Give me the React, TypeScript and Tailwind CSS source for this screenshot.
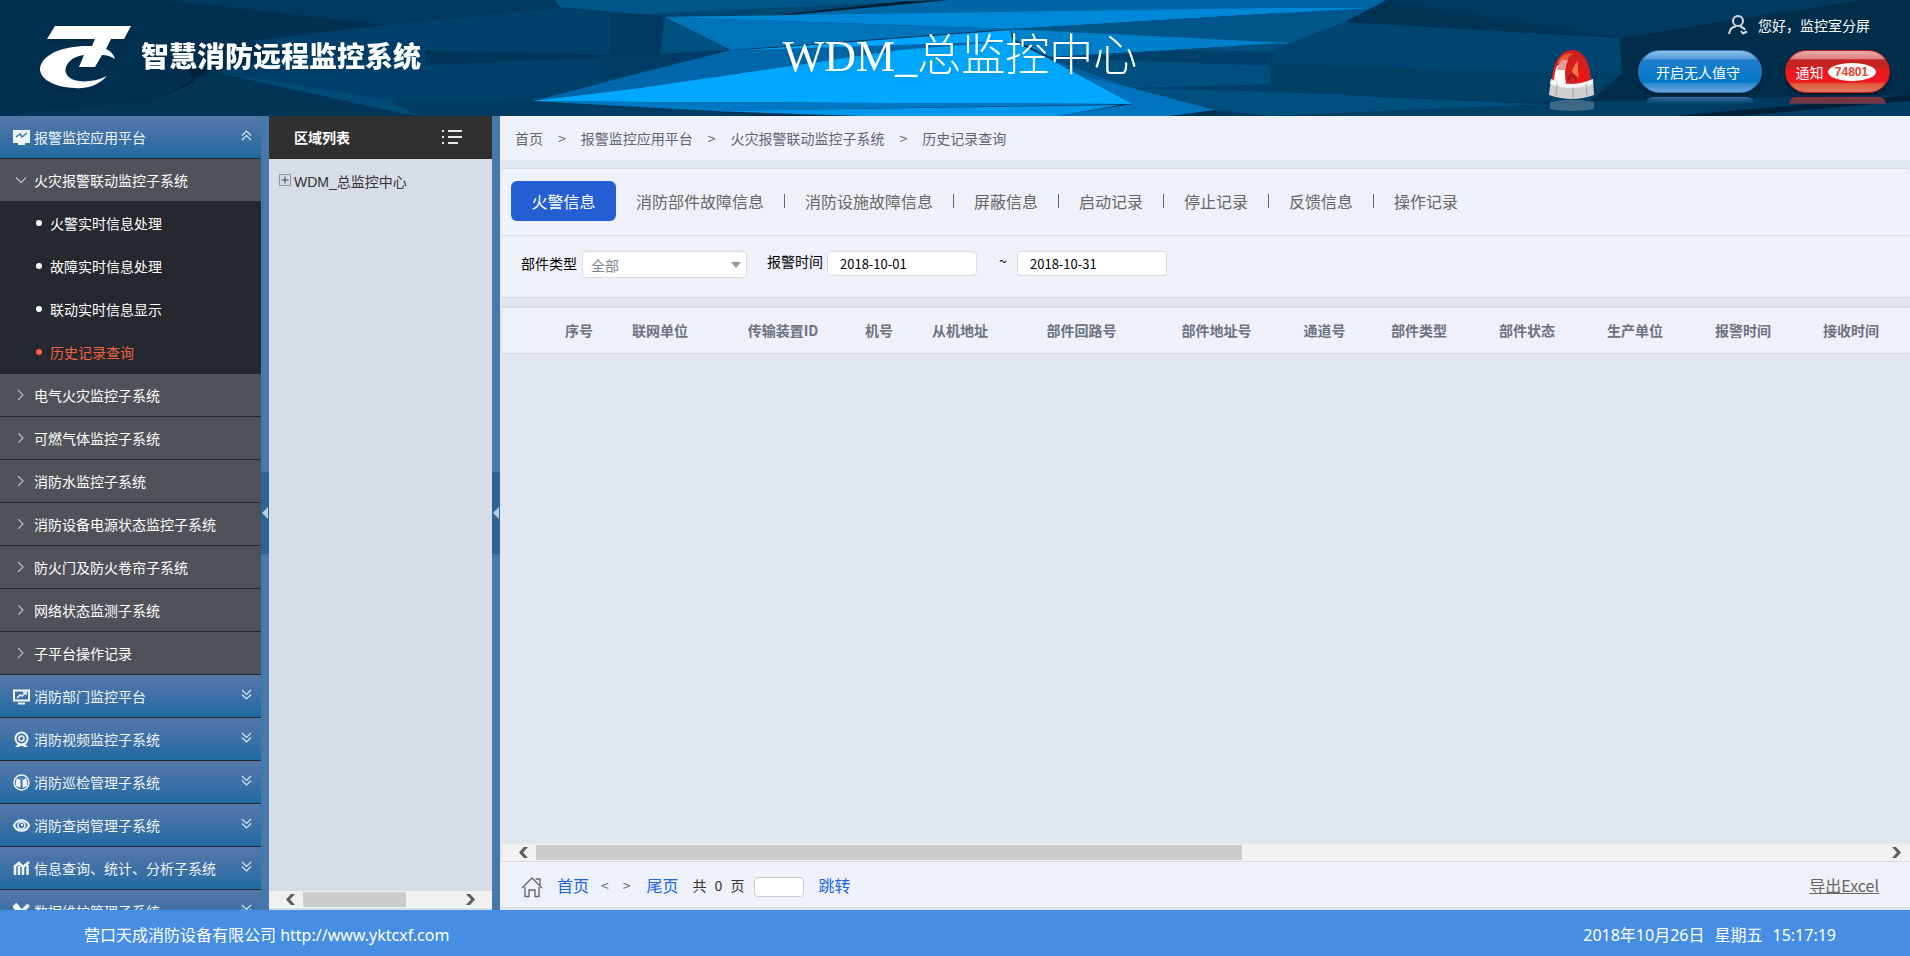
import type { ReactNode } from 'react';

type IconName = 'monitor' | 'board' | 'camera' | 'patrol' | 'eye' | 'stats' | 'tools';

const alarmChildren = ['火警实时信息处理', '故障实时信息处理', '联动实时信息显示', '历史记录查询'];

const subSystems = [
  '电气火灾监控子系统',
  '可燃气体监控子系统',
  '消防水监控子系统',
  '消防设备电源状态监控子系统',
  '防火门及防火卷帘子系统',
  '网络状态监测子系统',
  '子平台操作记录',
];

const platforms: { icon: IconName; label: string }[] = [
  { icon: 'board', label: '消防部门监控平台' },
  { icon: 'camera', label: '消防视频监控子系统' },
  { icon: 'patrol', label: '消防巡检管理子系统' },
  { icon: 'eye', label: '消防查岗管理子系统' },
  { icon: 'stats', label: '信息查询、统计、分析子系统' },
  { icon: 'tools', label: '数据维护管理子系统' },
];

const crumbs = ['首页', '报警监控应用平台', '火灾报警联动监控子系统', '历史记录查询'];

const tabs = [
  '消防部件故障信息',
  '消防设施故障信息',
  '屏蔽信息',
  '启动记录',
  '停止记录',
  '反馈信息',
  '操作记录',
];

const columns = [
  { label: '', width: 'min-w-[50px]' },
  { label: '序号', width: 'min-w-[54px]' },
  { label: '联网单位', width: 'min-w-[108px]' },
  { label: '传输装置ID', width: 'min-w-[138px]' },
  { label: '机号', width: 'min-w-[54px]' },
  { label: '从机地址', width: 'min-w-[108px]' },
  { label: '部件回路号', width: 'min-w-[135px]' },
  { label: '部件地址号', width: 'min-w-[135px]' },
  { label: '通道号', width: 'min-w-[81px]' },
  { label: '部件类型', width: 'min-w-[108px]' },
  { label: '部件状态', width: 'min-w-[108px]' },
  { label: '生产单位', width: 'min-w-[108px]' },
  { label: '报警时间', width: 'min-w-[108px]' },
  { label: '接收时间', width: 'min-w-[108px]' },
];

const facets: [string, string][] = [
  ['#00395f', '165,0 555,0 565,7 385,25'],
  ['#00406a', '250,41 385,25 565,7 700,12 700,116 420,116 215,72 300,52'],
  ['#00355a', '425,50 640,56 425,65'],
  ['#003557', '0,116 150,100 215,72 415,116'],
  ['#004b77', '215,72 395,101 420,116 400,113'],
  ['#00243c', '185,68 210,70 155,100 195,82'],
  ['#003b61', '390,102 533,101 640,104 760,116 420,116'],
  ['#00568b', '555,0 920,0 770,16 640,14 560,7'],
  ['#0067a6', '900,0 1386,0 1386,7 1280,13 665,17 770,16'],
  ['#004872', '640,14 770,8 900,2 770,16 665,17'],
  ['#001f33', '768,16 905,1 950,0 790,15'],
  ['#003a60', '640,14 665,16 660,54 610,58 610,14'],
  ['#00507f', '665,17 731,50 660,54'],
  ['#003c66', '660,54 731,50 640,73 600,80 600,56'],
  ['#0074ba', '665,17 1010,29 731,50'],
  ['#0088d8', '665,17 1280,8 1280,13 1010,29'],
  ['#0068aa', '533,101 640,73 731,50 1010,38 1013,42 640,88'],
  ['#00a6ff', '744,50 1010,30 1013,41'],
  ['#00a8ff', '533,101 640,88 900,50 1013,41 1048,58 1133,104 640,102'],
  ['#00568b', '1010,29 1280,13 1385,7 1296,43 1270,43'],
  ['#0088d8', '1270,8 1375,8 1280,13'],
  ['#0080cb', '1010,29 1270,42 1296,43 1050,57 1015,40'],
  ['#00507f', '1048,58 1280,43 1350,60 1350,116 1215,110 1132,88'],
  ['#00406a', '1100,56 1180,50 1280,52 1620,70 1600,76 1280,66 1048,58'],
  ['#00406a', '1130,88 1280,84 1560,103 1280,92'],
  ['#004470', '1270,51 1345,22 1620,38 1622,74 1270,64'],
  ['#003456', '1345,22 1386,0 1620,38'],
  ['#004067', '1270,64 1622,74 1590,102 1270,92'],
  ['#00507f', '1215,110 1270,92 1560,105 1270,116'],
  ['#003f66', '1270,116 1590,102 1750,102 1680,116'],
  ['#0061a2', '1048,58 1132,88 1133,104'],
  ['#0074be', '1085,77 1132,88 1215,110 1170,116 1055,116 1133,104'],
  ['#0078c4', '533,101 640,102 1133,104 715,111 640,107'],
  ['#0096ec', '712,111 1120,105 1057,116 860,116'],
  ['#002d4a', '1620,38 1860,0 1910,0 1910,95 1590,101 1622,74'],
  ['#00203a', '1675,116 1910,95 1910,101 1740,116'],
  ['#003b60', '1740,116 1910,101 1910,116'],
];

function HeaderBackdrop() {
  return (
    <svg
      className="absolute inset-0 h-full w-full"
      viewBox="0 0 1910 116"
      preserveAspectRatio="none"
      aria-hidden="true"
    >
      <rect width="1910" height="116" fill="#003051" />
      <rect x="1215" width="695" height="116" fill="#003a60" />
      {facets.map(([fill, points]) => (
        <polygon key={points} fill={fill} points={points} />
      ))}
    </svg>
  );
}

function Logo() {
  return (
    <svg className="h-16 w-24 drop-shadow-md" viewBox="38 25 96 64" fill="#fff" aria-hidden="true">
      <path d="M55 26H131L124 39H111L106 49Q113 52 115 59Q109 55 102 55L95 67H79L84 55C69 57 64 67 66 73C69 82 88 85 107 76C98 86 85 89 75 88C52 87 40 78 40 69C41 55 62 45 92 46L95 39H47Z" />
    </svg>
  );
}

function Siren() {
  return (
    <svg className="h-[62px] w-[46px]" viewBox="0 0 46 62" aria-hidden="true">
      <path d="M3 34C3 12 12 0 23 0S42 12 42 34Z" fill="#d01f1e" />
      <path d="M3 34C3 26 4 19 7 14L8 34Z" fill="#f01a16" />
      <path d="M8 13Q13 3 24 3Q18 8 17 14Z" fill="#ea5a3a" />
      <path d="M5 30Q6 18 9 15H17Q15 22 17 33Q9 34 5 30Z" fill="#fff" />
      <path d="M8 20Q9 14 13 10H19Q17 15 16 20Z" fill="#e59a96" />
      <path d="M23 13L28 24L27 33L36 31L34 14L30 20L28 11Z" fill="#f01414" />
      <path d="M29 11Q23 18 23 22L30 28Q28 19 29 11Z" fill="#f07a45" />
      <path d="M20 30V27L23 25L27 29V31" fill="none" stroke="#7c1010" />
      <path d="M2 29Q22 39 44 29L45 45Q23 53 0 45Z" fill="#cfcfd2" />
      <path d="M2 29Q22 39 44 29L44 34Q23 42 1 34Z" fill="#f3f3f3" />
      <path d="M8 34L7 46M24 37V49M37 34L38 46" stroke="#a3a3a8" />
      <path d="M1 52Q23 47 45 52V59Q23 63 1 59Z" fill="#6f8ba0" opacity=".55" />
    </svg>
  );
}

function UserIcon() {
  return (
    <svg className="h-5 w-5" viewBox="0 0 20 20" fill="none" stroke="#d5dbe1" strokeWidth="2" aria-hidden="true">
      <circle cx="10" cy="6" r="5" />
      <path d="M1 19Q2 12 8 11.500M12 11.500Q16 12.500 17 15M13 16L15 18.500L19 16.500" />
    </svg>
  );
}

const iconShapes: Record<IconName, ReactNode> = {
  monitor: (
    <>
      <path d="M1 2h15v11H1zM5 15h7" fill="currentColor" strokeWidth="2" />
      <path d="M3 8l4-3 2 3 5-4" stroke="#3d72a5" strokeWidth="1.500" />
    </>
  ),
  board: (
    <>
      <path d="M1 2.500h15v10H1zM5 15.500h7" strokeWidth="2" />
      <path d="M4 10l3-3 2 1 4-4M10 4h3v3" strokeWidth="1.500" />
    </>
  ),
  camera: (
    <>
      <circle cx="8.500" cy="7.500" r="6" strokeWidth="2" />
      <circle cx="8.500" cy="7.500" r="2.500" strokeWidth="1.500" />
      <path d="M5 13l-3 3h4l1-1h3l1 1h4l-3-3" fill="currentColor" stroke="none" />
    </>
  ),
  patrol: (
    <>
      <circle cx="8.500" cy="8.500" r="7.500" strokeWidth="1.500" />
      <path d="M7.500 3v11L3 12Q2 8 4 4l3 2zM9.500 3v11l4.500-2Q15 8 13 4l-3 2z" fill="currentColor" stroke="none" />
    </>
  ),
  eye: (
    <>
      <path d="M1 8.500C4 1.500 13 1.500 16 8.500C13 15.500 4 15.500 1 8.500z" strokeWidth="2" />
      <circle cx="8.500" cy="8.500" r="3.500" strokeWidth="1.500" />
      <circle cx="9" cy="8" r="1.200" fill="currentColor" stroke="none" />
    </>
  ),
  stats: (
    <path d="M2 15V7M6 15V6M10 15V8M14.500 15V5M1 7l5-4 4 4 6-5" strokeWidth="2.500" />
  ),
  tools: (
    <path d="M4 3l9 10M15 2L4 13M1 2q0 4 4 4M2 1l3 2M12 6l4-4" strokeWidth="3" />
  ),
};

function MenuIcon({ name }: { name: IconName }) {
  return (
    <svg
      className="h-[17px] w-[17px] text-slate-100"
      viewBox="0 0 17 17"
      fill="none"
      stroke="currentColor"
      aria-hidden="true"
    >
      {iconShapes[name]}
    </svg>
  );
}

function DoubleChevron({ up = false }: { up?: boolean }) {
  return (
    <svg
      className="mb-1 ml-auto h-[11px] w-[11px]"
      viewBox="0 0 11 11"
      fill="none"
      stroke="#dbe6f2"
      strokeWidth="1.200"
      aria-hidden="true"
    >
      <path d={up ? 'M1 5.500l4.500-4.500L10 5.500M1 10l4.500-4.500L10 10' : 'M1 1l4.500 4.500L10 1M1 5.500l4.500 4.500L10 5.500'} />
    </svg>
  );
}

function PlatformButton({ icon, label, open }: { icon: IconName; label: string; open?: boolean }) {
  return (
    <button
      type="button"
      className="flex h-[43px] w-full shrink-0 items-center gap-1 border-b border-[#25282f] bg-linear-to-b from-[#5578aa] to-[#1d6aa2] pr-[9px] pl-[13px] text-slate-100"
    >
      <MenuIcon name={icon} />
      {label}
      <DoubleChevron up={open} />
    </button>
  );
}

function SubSystemButton({ label, open }: { label: string; open?: boolean }) {
  return (
    <button
      type="button"
      className="flex h-[43px] w-full shrink-0 items-center border-b border-[#25282f] bg-[#505259] pl-4 text-white"
    >
      <svg className="mr-2 h-[10px] w-[10px]" viewBox="0 0 10 10" fill="none" stroke="#b4b8bf" strokeWidth="1.300" aria-hidden="true">
        <path d={open ? 'M0 2.500l5 5 5-5' : 'M2 0l5 5-5 5'} />
      </svg>
      {label}
    </button>
  );
}

function Sidebar() {
  return (
    <nav className="flex w-[261px] shrink-0 flex-col overflow-hidden text-sm">
      <PlatformButton icon="monitor" label="报警监控应用平台" open />
      <SubSystemButton label="火灾报警联动监控子系统" open />
      <ul className="shrink-0 bg-[#25282f]">
        {alarmChildren.map((label) => {
          const active = label === '历史记录查询';
          return (
            <li key={label}>
              <a
                href="#"
                className={
                  active
                    ? 'flex h-[43px] items-center gap-2 pb-[2px] pl-9 text-[#f2603f]'
                    : 'flex h-[43px] items-center gap-2 pb-[2px] pl-9 text-white'
                }
              >
                <span className="h-[6px] w-[6px] rounded-full bg-current" />
                {label}
              </a>
            </li>
          );
        })}
      </ul>
      {subSystems.map((label) => (
        <SubSystemButton key={label} label={label} />
      ))}
      {platforms.map((item) => (
        <PlatformButton key={item.label} icon={item.icon} label={item.label} />
      ))}
    </nav>
  );
}

function Splitter({ label }: { label: string }) {
  return (
    <div className="flex w-2 shrink-0 flex-col bg-[#4678a9] pt-[356px]">
      <button type="button" aria-label={label} className="flex h-[82px] items-center justify-center bg-[#2e6493]">
        <svg className="h-3 w-[6px]" viewBox="0 0 6 12" fill="#b5cfe8" aria-hidden="true">
          <path d="M6 0v12L0 6z" />
        </svg>
      </button>
    </div>
  );
}

function ScrollArrow({ right = false }: { right?: boolean }) {
  return (
    <svg className="h-[11px] w-[9px] shrink-0" viewBox="0 0 9 11" fill="#5c5c5c" aria-hidden="true">
      <path d={right ? 'M0 0h4l5 5.500L4 11H0l5-5.500z' : 'M9 0H5L0 5.500 5 11h4L4 5.500z'} />
    </svg>
  );
}

function RegionPanel() {
  return (
    <aside className="flex w-[223px] shrink-0 flex-col bg-[#d6dde6] text-sm">
      <div className="flex h-[43px] items-center justify-between bg-[#303030] pr-[30px] pb-[2px] pl-[25px]">
        <h2 className="font-bold text-white">区域列表</h2>
        <svg className="h-4 w-5" viewBox="0 0 20 16" stroke="#e8e8e8" strokeWidth="2" aria-hidden="true">
          <path d="M0 2h2M6 2h14M0 8h2M6 8h14M0 14h2M6 14h10" />
        </svg>
      </div>
      <button type="button" className="flex h-[46px] items-center gap-[3px] pl-[10px] text-[#333]">
        <svg className="mb-1 h-3 w-3" viewBox="0 0 12 12" fill="none" aria-hidden="true">
          <path d="M.5 .5h11v11H.5z" stroke="#8c97a4" />
          <path d="M2.500 6h7M6 2.500v7" stroke="#444" />
        </svg>
        <span className="font-['Liberation_Sans','Noto_Sans_CJK_SC',sans-serif]">WDM_总监控中心</span>
      </button>
      <div className="mt-auto mb-[2px] flex h-[17px] items-center bg-[#f1f1f1] px-[17px]">
        <ScrollArrow />
        <div className="flex flex-1 px-2">
          <div className="h-[15px] w-2/3 bg-[#cdcdcd]" />
        </div>
        <ScrollArrow right />
      </div>
    </aside>
  );
}

function Header() {
  return (
    <header className="relative h-[116px] shrink-0 overflow-hidden">
      <HeaderBackdrop />
      <div className="relative flex h-full items-start justify-between">
        <div className="flex flex-1 items-center gap-[7px] pt-[25px] pl-[38px] text-white">
          <Logo />
          <span className="mb-1 text-[28px] leading-8 font-black drop-shadow-md">智慧消防远程监控系统</span>
        </div>
        <h1 className="pt-[30px] pr-2 font-['Liberation_Serif','Noto_Sans_CJK_SC',serif] text-[44px] leading-[54px] font-light text-white drop-shadow-md">
          WDM_总监控中心
        </h1>
        <div className="flex flex-1 flex-col items-end pr-5">
          <div className="flex items-center gap-[10px] pt-[15px] pr-5 text-sm text-white">
            <UserIcon />
            您好，监控室分屏
          </div>
          <div className="flex items-start pt-[15px]">
            <Siren />
            <div className="ml-[43px] w-[124px]">
              <button
                type="button"
                className="h-[43px] w-full rounded-full border border-[#2a7cc0] bg-[linear-gradient(#8fc0ea_0%,#5a9fdc_18%,#1f7ecb_22%,#0078c8_75%,#2f8ad0_80%,#6aa5e0_100%)] pr-1 text-sm text-white shadow-[0_2px_3px_#001a2c]"
              >
                开启无人值守
              </button>
              <div className="mx-2 mt-1 h-[7px] rounded-t-full bg-linear-to-b from-[#3272a8] to-transparent" />
            </div>
            <div className="ml-[23px] w-[105px]">
              <button
                type="button"
                className="flex h-[43px] w-full items-center justify-center gap-1 rounded-full border border-[#c01c20] bg-[linear-gradient(#e7aaa8_0%,#e08885_18%,#c52222_22%,#c52222_42%,#f01820_45%,#f01820_76%,#e05a3c_80%,#e07a60_100%)] pr-1 text-sm text-white shadow-[0_2px_3px_#001a2c]"
              >
                通知
                <span className="h-[18px] w-12 rounded-[50%] bg-white font-['Liberation_Sans',sans-serif] text-xs leading-[18px] font-bold text-[#e0402c]">
                  74801
                </span>
              </button>
              <div className="mx-1 mt-1 h-[7px] rounded-t-full bg-linear-to-b from-[#8e3038] to-[#5a3a4c]" />
            </div>
          </div>
        </div>
      </div>
    </header>
  );
}

function Filters() {
  return (
    <form className="flex h-[62px] items-start border-b border-[#d9dcdf] pt-[15px] pl-5 text-sm text-black">
      <label htmlFor="part-type" className="pt-[2px] leading-5">
        部件类型
      </label>
      <div className="relative ml-[5px]">
        <select
          id="part-type"
          className="h-[27px] w-[165px] appearance-none rounded-sm border border-[#d9dcdf] bg-white pl-2 text-sm text-[#7d8794]"
        >
          <option>全部</option>
        </select>
        <svg className="pointer-events-none absolute top-[11px] right-[6px] h-[6px] w-[10px]" viewBox="0 0 10 6" fill="#999" aria-hidden="true">
          <path d="M0 0h10L5 6z" />
        </svg>
      </div>
      <label htmlFor="start-date" className="ml-5 leading-5">
        报警时间
      </label>
      <input
        id="start-date"
        type="text"
        defaultValue="2018-10-01"
        className="ml-1 h-[25px] w-[150px] rounded-sm border border-[#d9dcdf] bg-white px-3 text-[13px]"
      />
      <label htmlFor="end-date" className="w-10 pl-3 text-center leading-5">
        ~
      </label>
      <input
        id="end-date"
        type="text"
        defaultValue="2018-10-31"
        className="h-[25px] w-[150px] rounded-sm border border-[#d9dcdf] bg-white px-3 text-[13px]"
      />
    </form>
  );
}

function Pager() {
  return (
    <div className="mb-[2px] flex h-[47px] shrink-0 items-center border-y border-[#d9dcdf] bg-[#eef1fa] pr-[31px] pl-[21px] text-[#666]">
      <svg className="mt-1 h-[22px] w-[22px]" viewBox="0 0 22 22" fill="none" stroke="#666" strokeWidth="1.300" aria-hidden="true">
        <path d="M1 12L11 2l10 10M14.500 3H19v6.500M4 11v9.500h4V14h6v6.500h4V11" />
      </svg>
      <a href="#" className="ml-[14px] text-[#1b66e5]">首页</a>
      <a href="#" className="ml-3 text-sm">&lt;</a>
      <a href="#" className="ml-[14px] text-sm">&gt;</a>
      <a href="#" className="ml-4 text-[#1b66e5]">尾页</a>
      <span className="ml-[14px] flex gap-2 text-sm text-[#333]">
        <span>共</span>
        <span>0</span>
        <span>页</span>
      </span>
      <input type="text" aria-label="页码" className="mt-1 ml-[10px] h-5 w-[50px] rounded-sm border border-[#ccc] bg-white px-1 text-xs" />
      <button type="button" className="ml-[14px] text-[#1b66e5]">跳转</button>
      <a href="#" className="ml-auto underline">导出Excel</a>
    </div>
  );
}

function Content() {
  return (
    <main className="flex min-w-0 flex-1 flex-col bg-[#e0e7f1]">
      <ol className="flex h-11 shrink-0 items-center gap-[15px] bg-[#eef1fa] pl-[15px] text-sm text-[#5f6673]">
        {crumbs.map((crumb, i) => (
          <li key={crumb} className="flex gap-[15px]">
            {i > 0 && <span>&gt;</span>}
            <a href="#">{crumb}</a>
          </li>
        ))}
      </ol>

      <section className="mt-2 ml-px shrink-0 rounded-t border-t border-[#d9dcdf] bg-[#eef1fa]">
        <div className="flex h-[67px] items-center border-b border-[#d9dcdf] pb-[2px] pl-[10px] text-[#666]">
          <button type="button" className="h-10 w-[105px] rounded-md bg-[#235fd3] text-white">
            火警信息
          </button>
          {tabs.map((tab, i) => (
            <div key={tab} className="flex items-center">
              {i > 0 && <span className="h-[14px] w-px bg-[#666]" />}
              <button type="button" className="px-5">
                {tab}
              </button>
            </div>
          ))}
        </div>
        <Filters />
      </section>

      <div className="mt-2 ml-[2px] min-h-0 flex-1 overflow-hidden">
        <div className="border-t-2 border-b border-[#d9dcdf] bg-[#eef1fa]">
          <table className="border-collapse text-sm text-[#6b7280]">
            <thead>
              <tr className="h-[45px]">
                {columns.map((col) => (
                  <th key={col.label} scope="col" className={`p-0 pb-[2px] text-center font-bold whitespace-nowrap ${col.width}`}>
                    {col.label}
                  </th>
                ))}
              </tr>
            </thead>
            <tbody />
          </table>
        </div>
      </div>

      <div className="ml-[2px] flex h-[17px] shrink-0 items-center bg-[#f1f1f1] pr-[9px] pl-[17px]">
        <ScrollArrow />
        <div className="flex flex-1 px-2">
          <div className="h-[15px] w-11/21 bg-[#cdcdcd]" />
        </div>
        <ScrollArrow right />
      </div>
      <Pager />
    </main>
  );
}

export default function App() {
  return (
    <div className="flex h-screen flex-col overflow-hidden bg-[#e0e7f1] font-['Noto_Sans_CJK_SC','Open_Sans',sans-serif] text-base">
      <Header />
      <div className="flex min-h-0 flex-1">
        <Sidebar />
        <Splitter label="收起菜单" />
        <RegionPanel />
        <Splitter label="收起区域列表" />
        <Content />
      </div>
      <footer className="flex h-[46px] shrink-0 items-center justify-between bg-[#468ee3] pt-1 pr-[74px] pl-[84px] font-['Noto_Sans','Noto_Sans_CJK_SC',sans-serif] text-white">
        <p>
          营口天成消防设备有限公司 <a href="http://www.yktcxf.com">http://www.yktcxf.com</a>
        </p>
        <p className="flex gap-[10px]">
          <span>2018年10月26日</span>
          <span>星期五</span>
          <span>15:17:19</span>
        </p>
      </footer>
    </div>
  );
}
